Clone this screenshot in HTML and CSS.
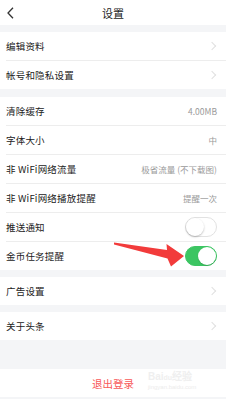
FILE: index.html
```html
<!DOCTYPE html>
<html lang="zh-CN">
<head>
<meta charset="utf-8">
<title>设置</title>
<link rel="stylesheet" href="styles.css">
</head>
<body>
<div class="page">
  <header class="header">
    <span class="back">
      <svg width="7" height="12" viewBox="0 0 7 12"><path d="M6 0.8 L1 6 L6 11.2" fill="none" stroke="#333" stroke-width="1.3"/></svg>
    </span>
    <span class="title">设置</span>
    <span></span>
  </header>

  <section class="group g1">
    <div class="row"><span class="label">编辑资料</span><span class="chev"></span></div>
    <div class="row"><span class="label">帐号和隐私设置</span><span class="chev"></span></div>
  </section>

  <section class="group g2">
    <div class="row"><span class="label">清除缓存</span><span class="value">4.00MB</span></div>
    <div class="row"><span class="label">字体大小</span><span class="value">中</span></div>
    <div class="row"><span class="label">非 WiFi网络流量</span><span class="value">极省流量 (不下载图)</span></div>
    <div class="row"><span class="label">非 WiFi网络播放提醒</span><span class="value">提醒一次</span></div>
    <div class="row"><span class="label">推送通知</span><span class="toggle"></span></div>
    <div class="row"><span class="label">金币任务提醒</span><span class="toggle on"></span></div>
  </section>

  <section class="group g3">
    <div class="row"><span class="label">广告设置</span><span class="chev"></span></div>
  </section>

  <section class="group g3">
    <div class="row"><span class="label">关于头条</span><span class="chev"></span></div>
  </section>

  <section class="group g4">
    <div class="logout">退出登录</div>
  </section>

  <svg class="arrow" width="226" height="399" viewBox="0 0 226 399">
    <polygon points="114,242.5 167,250 166.5,244 184,256 171,266.5 167.5,258.5 114,244.5" fill="#f23b3b"/>
  </svg>

  <div class="watermark">
    <div class="wm1">Bai<span class="du">du</span>经验</div>
    <div class="wm2">jingyan.baidu.com</div>
  </div>
</div>
</body>
</html>
```
FILE: styles.css
```css
html, body {
  margin: 0;
  padding: 0;
}
body {
  background: #f4f5f7;
  font-family: "Noto Sans CJK SC", "Noto Sans", sans-serif;
  color: #222;
}
.page {
  position: relative;
  width: 226px;
  height: 399px;
  overflow: hidden;
  background: #f4f5f7;
}
.header {
  height: 25px;
  background: #fff;
  display: grid;
  grid-template-columns: 30px 1fr 30px;
  align-items: center;
}
.back {
  display: flex;
  align-items: center;
  padding-left: 7px;
  height: 25px;
}
.title {
  text-align: center;
  font-size: 11px;
  color: #222;
}
.group {
  background: #fff;
}
.g1 { margin-top: 7px; }
.g2 { margin-top: 8px; }
.g3 { margin-top: 7px; }
.g4 { margin-top: 29px; }
.row {
  height: 28px;
  margin-left: 6px;
  padding-right: 9px;
  display: flex;
  align-items: center;
  justify-content: space-between;
}
.row + .row {
  border-top: 1px solid #ededed;
}
.label {
  font-size: 9.5px;
  letter-spacing: 0.2px;
  color: #222;
}
.value {
  font-size: 8.5px;
  color: #9a9a9a;
}
.chev {
  width: 5px;
  height: 5px;
  border-top: 1px solid #e0e0e0;
  border-right: 1px solid #e0e0e0;
  transform: rotate(45deg);
  margin-right: 2px;
}
.toggle {
  position: relative;
  width: 30px;
  height: 18px;
  border-radius: 10px;
  border: 1px solid #e2e2e2;
  background: #fff;
}
.toggle::after {
  content: "";
  position: absolute;
  top: 0;
  left: 0;
  width: 18px;
  height: 18px;
  border-radius: 50%;
  background: #fff;
  box-shadow: 0 1px 2px rgba(0,0,0,0.25);
}
.toggle.on {
  background: #3cc562;
  border-color: #3cc562;
}
.toggle.on::after {
  left: 12px;
  box-shadow: 0 1px 1px rgba(0,0,0,0.15);
}
.logout {
  height: 28px;
  display: flex;
  align-items: center;
  justify-content: center;
  font-size: 10.5px;
  color: #f85959;
}
.arrow {
  position: absolute;
  top: 0;
  left: 0;
  pointer-events: none;
}
.watermark {
  position: absolute;
  left: 148px;
  top: 372px;
  line-height: 1;
  pointer-events: none;
}
.wm1 {
  font-family: "Liberation Sans", sans-serif;
  font-size: 10px;
  font-weight: bold;
  color: #efefef;
}
.du {
  font-size: 7px;
}
.wm2 {
  font-family: "Liberation Sans", sans-serif;
  font-size: 6px;
  margin-top: 2px;
  color: #ececec;
}
```
